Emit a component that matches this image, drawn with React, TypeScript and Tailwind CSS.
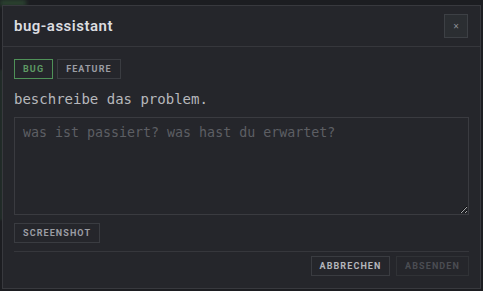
import React from "react";

const btnFont = { fontFamily: "Roboto, 'Liberation Sans', sans-serif" } as const;

export default function App() {
  return (
    <div className="relative w-[483px] h-[291px] overflow-hidden bg-[#1c1d21]">
      <div className="absolute left-0 top-0 w-[26px] h-[6px] bg-[#2c4531] blur-[2px]" />
      <div className="absolute left-0 top-[70px] w-[3px] h-[150px] bg-[#23302a] blur-[1px]" />
      <div className="relative ml-[2px] mt-[5px] w-[479px] h-[284px] border border-[#38393e] bg-[#25262b] flex flex-col">
        <div className="h-[41px] flex items-center justify-between pl-[11px] pr-[12px] border-b border-[#36373c]">
          <span
            className="text-[15px] font-semibold text-[#dcdde0] tracking-[0.5px]"
            style={btnFont}
          >
            bug-assistant
          </span>
          <button className="w-[24px] h-[24px] flex items-center justify-center border border-[#3d4045] bg-[#2b2e32] text-[#8d8f95] text-[10px] leading-none">
            ×
          </button>
        </div>
        <div className="flex flex-col px-[11px] pt-[12px]">
          <div className="flex gap-[4px]">
            <button
              className="h-[20px] px-[8px] border border-[#4f9158] text-[#5e9a64] text-[9px] font-bold tracking-[1.1px] leading-none"
              style={btnFont}
            >
              BUG
            </button>
            <button
              className="h-[20px] px-[8px] border border-[#3a3c41] text-[#9b9da3] text-[9px] font-bold tracking-[1.1px] leading-none"
              style={btnFont}
            >
              FEATURE
            </button>
          </div>
          <div
            className="mt-[10px] h-[20px] leading-[20px] text-[14px] text-[#b7b8bc]"
            style={{ fontFamily: "'DejaVu Sans Mono', monospace" }}
          >
            beschreibe das problem.
          </div>
          <textarea
            className="mt-[8px] h-[98px] w-full border border-[#3a3b40] bg-[#25262b] px-[8px] pt-[5px] text-[13.3px] leading-[20px] text-[#b7b8bc] placeholder:text-[#5d5f64] outline-none"
            style={{ fontFamily: "'DejaVu Sans Mono', monospace" }}
            placeholder="was ist passiert? was hast du erwartet?"
          />
          <div className="mt-[8px] flex">
            <button
              className="h-[20px] px-[8px] border border-[#3a3c41] text-[#9b9da3] text-[9px] font-bold tracking-[1.1px] leading-none"
              style={btnFont}
            >
              SCREENSHOT
            </button>
          </div>
          <div className="mt-[8px] border-t border-[#36373c] pt-[4px] flex justify-end gap-[6px]">
            <button
              className="h-[20px] w-[79px] border border-[#3a3c41] text-[#b4b6bb] text-[9px] font-bold tracking-[1.1px] leading-none"
              style={btnFont}
            >
              ABBRECHEN
            </button>
            <button
              className="h-[20px] w-[73px] border border-[#303236] text-[#4b4d53] text-[9px] font-bold tracking-[1.1px] leading-none"
              style={btnFont}
            >
              ABSENDEN
            </button>
          </div>
        </div>
      </div>
    </div>
  );
}
